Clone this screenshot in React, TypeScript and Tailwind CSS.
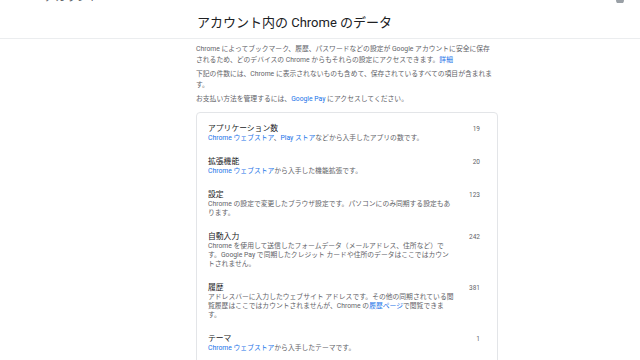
const items = [
  {
    title: 'アプリケーション数',
    count: '19',
    desc: (
      <>
        <a className="text-[#1a73e8]">Chrome ウェブストア</a>、<a className="text-[#1a73e8]">Play ストア</a>などから入手したアプリの数です。
      </>
    ),
  },
  {
    title: '拡張機能',
    count: '20',
    desc: (
      <>
        <a className="text-[#1a73e8]">Chrome ウェブストア</a>から入手した機能拡張です。
      </>
    ),
  },
  {
    title: '設定',
    count: '123',
    desc: <>Chrome の設定で変更したブラウザ設定です。パソコンにのみ同期する設定もあります。</>,
  },
  {
    title: '自動入力',
    count: '242',
    desc: (
      <>
        Chrome を使用して送信したフォームデータ（メールアドレス、住所など）です。Google Pay で同期したクレジット カードや住所のデータはここではカウントされません。
      </>
    ),
  },
  {
    title: '履歴',
    count: '381',
    desc: (
      <>
        アドレスバーに入力したウェブサイト アドレスです。その他の同期されている閲覧履歴はここではカウントされませんが、Chrome の<a className="text-[#1a73e8]">履歴ページ</a>で閲覧できます。
      </>
    ),
  },
  {
    title: 'テーマ',
    count: '1',
    desc: (
      <>
        <a className="text-[#1a73e8]">Chrome ウェブストア</a>から入手したテーマです。
      </>
    ),
  },
];

export default function App() {
  return (
    <div
      className="w-[640px] h-[360px] overflow-hidden bg-white [text-spacing-trim:space-all]"
      style={{ fontFamily: 'Roboto, "Noto Sans CJK JP", sans-serif' }}
    >
      {/* ヘッダー */}
      <div className="h-[39px] border-b border-[#ebedef] flex flex-col">
        <div className="h-[3px] overflow-hidden flex justify-between items-end pl-[44px] pr-[16px]">
          <span className="text-[11px] leading-[12px] text-[#5f6368] -mb-[1px]">アカウント</span>
          <span className="w-[8px] h-[8px] rounded-full bg-[#9aa0a6] -mb-[1px]" />
        </div>
        <div className="flex-1 flex items-center pl-[197px] pt-[4px]">
          <h1 className="text-[13px] text-[#202124]">アカウント内の Chrome のデータ</h1>
        </div>
      </div>

      {/* 本文 */}
      <div className="pl-[196px] w-[498px] pt-[5px]">
        <div className="w-[300px] text-[6.8px] leading-[11px] text-[#5f6368] flex flex-col gap-[3px]">
          <p>
            Chrome によってブックマーク、履歴、パスワードなどの設定が Google アカウントに安全に保存されるため、どのデバイスの Chrome からもそれらの設定にアクセスできます。
            <a className="text-[#1a73e8]">詳細</a>
          </p>
          <p>
            下記の件数には、Chrome に表示されないものも含めて、保存されているすべての項目が含まれます。
          </p>
          <p>
            お支払い方法を管理するには、<a className="text-[#1a73e8]">Google Pay</a> にアクセスしてください。
          </p>
        </div>

        <div className="mt-[7px] border border-[#e3e5e8] rounded-[4px] pt-[11px] pb-[24px] pl-[11px] pr-[17px] flex flex-col gap-[14px]">
          {items.map((it) => (
            <div key={it.title} className="flex justify-between">
              <div className="w-[246px]">
                <div className="text-[7.8px] leading-[10px] text-[#202124]">{it.title}</div>
                <div className="text-[6.8px] leading-[9px] text-[#5f6368]">{it.desc}</div>
              </div>
              <div className="text-[6.5px] leading-[10px] text-[#5f6368]">{it.count}</div>
            </div>
          ))}
        </div>
      </div>
    </div>
  );
}
